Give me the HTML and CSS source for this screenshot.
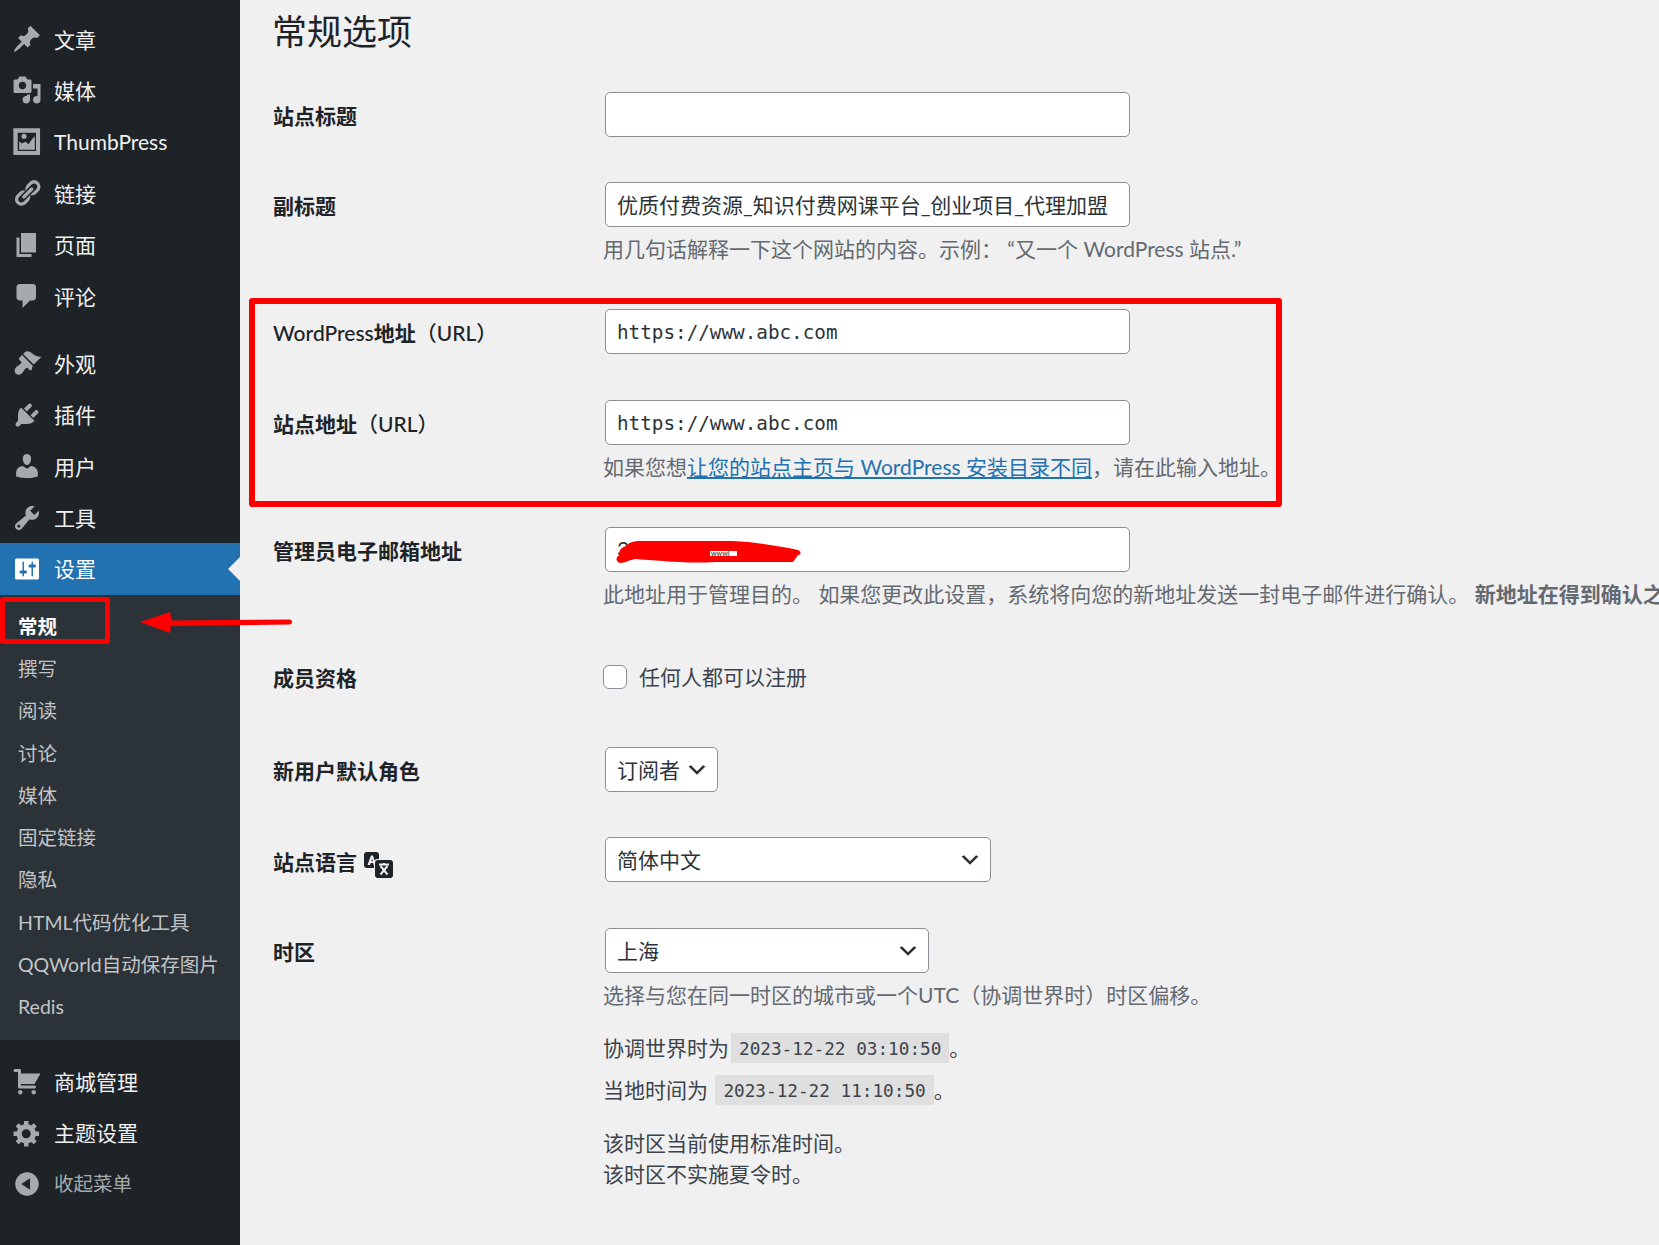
FILE: index.html
```html
<!DOCTYPE html>
<html lang="zh-CN">
<head>
<meta charset="utf-8">
<title>常规选项</title>
<link rel="stylesheet" href="styles.css">
</head>
<body>
<nav class="sidebar">
  <ul class="menu">
    <li class="item"><svg class="icon" viewBox="0 0 20 20"><path d="M10.44 3.02l1.82-1.82 6.36 6.35-1.83 1.82c-1.05-.68-2.48-.57-3.41.36l-.75.75c-.92.93-1.04 2.35-.35 3.41l-1.83 1.82-2.41-2.41-2.8 2.79c-.42.42-3.38 2.71-3.8 2.29s1.86-3.39 2.28-3.81l2.79-2.79L4.1 9.36l1.83-1.82c1.05.69 2.48.57 3.4-.36l.75-.75c.93-.92 1.05-2.35.36-3.41z"/></svg>文章</li>
    <li class="item"><svg class="icon" viewBox="0 0 20 20"><path d="M13 11V4c0-.55-.45-1-1-1h-1.67L9 1H5L3.67 3H2c-.55 0-1 .45-1 1v7c0 .55.45 1 1 1h10c.55 0 1-.45 1-1zM7 4.5c1.38 0 2.5 1.12 2.5 2.5S8.38 9.5 7 9.5 4.5 8.38 4.5 7 5.62 4.5 7 4.5zM14 6h5v10.5c0 1.38-1.12 2.5-2.5 2.5S14 17.88 14 16.5s1.12-2.5 2.5-2.5c.17 0 .34.02.5.05V9h-3V6zm-4 8.05V13h2v3.5c0 1.38-1.12 2.5-2.5 2.5S7 17.88 7 16.5 8.12 14 9.5 14c.17 0 .34.02.5.05z"/></svg>媒体</li>
    <li class="item"><svg class="icon" viewBox="0 0 20 20"><path fill-rule="evenodd" d="M.9.9h17.800v17.800H.9zM3.800 3.800v12.200h12.200V3.800z"/><path d="M4.800 9.500l1.700 1.500 2.500-1.200 2 1.700 2.500-3.500 1.700-2v9.200H4.800z"/><circle cx="8" cy="6.200" r="1.700"/></svg>ThumbPress</li>
    <li class="item"><svg class="icon" viewBox="0 0 20 20"><path d="M17.74 2.76c1.68 1.69 1.68 4.41 0 6.1l-1.53 1.52c-1.12 1.12-2.7 1.47-4.14 1.09l2.62-2.61.76-.77.76-.76c.84-.84.84-2.2 0-3.04-.84-.85-2.2-.85-3.04 0l-.77.76-3.38 3.38c-.37-1.44-.02-3.02 1.1-4.14l1.52-1.53c1.69-1.68 4.42-1.68 6.1 0zM8.59 13.43l5.34-5.34c.42-.42.42-1.1 0-1.52-.44-.43-1.13-.39-1.53 0l-5.33 5.34c-.42.42-.42 1.1 0 1.52.44.43 1.13.39 1.52 0zm-.76 2.29l4.14-4.15c.38 1.44.03 3.02-1.09 4.14l-1.52 1.53c-1.69 1.68-4.41 1.68-6.1 0-1.68-1.68-1.68-4.42 0-6.1l1.53-1.52c1.12-1.12 2.7-1.47 4.14-1.1l-4.14 4.15c-.85.84-.85 2.2 0 3.05.84.84 2.2.84 3.04 0z"/></svg>链接</li>
    <li class="item"><svg class="icon" viewBox="0 0 20 20"><path d="M6 15V2h10v13H6zm-1 1h8v2H3V5h2v11z"/></svg>页面</li>
    <li class="item"><svg class="icon" viewBox="0 0 20 20"><path d="M5 2h9c1.1 0 2 .9 2 2v7c0 1.1-.9 2-2 2h-2l-5 5v-5H5c-1.1 0-2-.9-2-2V4c0-1.1.9-2 2-2z"/></svg>评论</li>
  </ul>
  <ul class="menu">
    <li class="item"><svg class="icon" viewBox="0 0 20 20"><path d="M14.48 11.06L7.41 3.99l1.5-1.5c.5-.56 2.3-.47 3.51.32 1.21.8 1.43 1.28 2.91 2.1 1.18.64 2.45 1.26 4.45.85zm-.71.71L6.7 4.7 4.93 6.47c-.39.39-.39 1.02 0 1.41l1.06 1.06c.39.39.39 1.03 0 1.42-.6.6-1.43 1.11-2.21 1.69-.35.26-.7.53-1.01.84-1.38 1.38-1.13 3.28-.26 4.15.87.87 2.77 1.12 4.15-.26.31-.31.58-.66.84-1.01.58-.78 1.09-1.61 1.69-2.21.39-.39 1.03-.39 1.42 0l1.06 1.06c.39.39 1.02.39 1.41 0z"/></svg>外观</li>
    <li class="item"><svg class="icon" viewBox="0 0 20 20"><path d="M13.11 4.36L9.87 7.6 8 5.73l3.24-3.24c.35-.34 1.05-.2 1.56.32.52.51.66 1.21.31 1.55zm-8 1.77l.91-1.12 9.01 9.01-1.19.84c-.71.71-2.63 1.16-3.82 1.16H6.14L4.9 17.26c-.59.59-1.54.59-2.12 0-.59-.58-.59-1.53 0-2.12l1.24-1.24v-3.88c0-1.13.4-3.19 1.09-3.89zm7.26 3.97l3.24-3.24c.34-.35 1.04-.21 1.55.31.52.51.66 1.21.31 1.55l-3.24 3.25z"/></svg>插件</li>
    <li class="item"><svg class="icon" viewBox="0 0 20 20"><path d="M10 9.25c-2.27 0-2.73-3.44-2.73-3.44C7 4.02 7.82 2 9.97 2c2.16 0 2.98 2.02 2.71 3.81 0 0-.41 3.44-2.68 3.44zm0 2.57L12.72 10c2.39 0 4.52 2.33 4.52 4.53v2.49s-3.65 1.13-7.24 1.13c-3.65 0-7.24-1.13-7.24-1.13v-2.49c0-2.25 1.94-4.48 4.47-4.48z"/></svg>用户</li>
    <li class="item"><svg class="icon" viewBox="0 0 20 20"><path d="M16.68 9.77c-1.34 1.34-3.3 1.67-4.95.99l-5.41 6.52c-.99.99-2.59.99-3.58 0s-.99-2.59 0-3.57l6.52-5.42c-.68-1.65-.35-3.61.99-4.95 1.28-1.28 3.12-1.62 4.72-1.06l-2.89 2.89 2.82 2.82 2.86-2.87c.53 1.58.18 3.39-1.08 4.65zM3.81 16.21c.4.39 1.04.39 1.43 0 .4-.4.4-1.04 0-1.43-.39-.4-1.03-.4-1.43 0-.39.39-.39 1.03 0 1.43z"/></svg>工具</li>
    <li class="item item-active"><svg class="icon" viewBox="0 0 20 20"><path d="M18 16V4c0-.55-.45-1-1-1H3c-.55 0-1 .45-1 1v12c0 .55.45 1 1 1h14c.55 0 1-.45 1-1zM8 11h1c.55 0 1 .45 1 1s-.45 1-1 1H8v1.5c0 .28-.22.5-.5.5s-.5-.22-.5-.5V13H6c-.55 0-1-.45-1-1s.45-1 1-1h1V5.5c0-.28.22-.5.5-.5s.5.22.5.5V11zm5-2h-1c-.55 0-1-.45-1-1s.45-1 1-1h1V5.5c0-.28.22-.5.5-.5s.5.22.5.5V7h1c.55 0 1 .45 1 1s-.45 1-1 1h-1v5.5c0 .28-.22.5-.5.5s-.5-.22-.5-.5V9z"/></svg>设置</li>
  </ul>
  <ul class="submenu">
    <li class="subitem subitem-current">常规</li>
    <li class="subitem">撰写</li>
    <li class="subitem">阅读</li>
    <li class="subitem">讨论</li>
    <li class="subitem">媒体</li>
    <li class="subitem">固定链接</li>
    <li class="subitem">隐私</li>
    <li class="subitem">HTML代码优化工具</li>
    <li class="subitem">QQWorld自动保存图片</li>
    <li class="subitem">Redis</li>
  </ul>
  <ul class="menu menu-last">
    <li class="item"><svg class="icon" viewBox="0 0 20 20"><path d="M6 13h9c.55 0 1 .45 1 1s-.45 1-1 1H5c-.55 0-1-.45-1-1V4H2c-.55 0-1-.45-1-1s.45-1 1-1h3c.55 0 1 .45 1 1v2h13l-4 7H6v1zm-.5 3c.83 0 1.5.67 1.5 1.5S6.33 19 5.5 19 4 18.33 4 17.5 4.67 16 5.5 16zm9 0c.83 0 1.5.67 1.5 1.5s-.67 1.5-1.5 1.5-1.5-.67-1.5-1.5.67-1.5 1.5-1.5z"/></svg>商城管理</li>
    <li class="item"><svg class="icon" viewBox="0 0 20 20"><path d="M18 12h-2.18c-.17.7-.44 1.35-.81 1.93l1.54 1.54-2.1 2.1-1.54-1.54c-.58.36-1.23.63-1.91.79V19H8v-2.18c-.68-.16-1.33-.43-1.91-.79l-1.54 1.54-2.12-2.12 1.54-1.54c-.36-.58-.63-1.23-.79-1.91H1V9.03h2.17c.16-.7.44-1.35.8-1.94L2.43 5.55l2.1-2.1 1.54 1.54c.58-.37 1.24-.64 1.93-.81V2h3v2.18c.68.16 1.33.43 1.91.79l1.54-1.54 2.12 2.12-1.54 1.54c.36.59.64 1.24.8 1.94H18V12zm-8.5 1.5c1.66 0 3-1.34 3-3s-1.34-3-3-3-3 1.34-3 3 1.34 3 3 3z"/></svg>主题设置</li>
    <li class="item item-muted"><svg class="icon" viewBox="0 0 20 20"><path d="M10 2.16c4.33 0 7.84 3.51 7.84 7.84s-3.51 7.84-7.84 7.84S2.16 14.33 2.16 10 5.71 2.16 10 2.16zm2 11.72V6.12L6.18 9.97z"/></svg>收起菜单</li>
  </ul>
</nav>

<main class="content">
  <h1 class="title">常规选项</h1>

  <div class="row">
    <label class="label">站点标题</label>
    <div class="field"><input class="text" type="text" value=""></div>
  </div>

  <div class="row">
    <label class="label">副标题</label>
    <div class="field">
      <input class="text" type="text" value="优质付费资源_知识付费网课平台_创业项目_代理加盟">
      <p class="desc">用几句话解释一下这个网站的内容。示例： “又一个 WordPress 站点.”</p>
    </div>
  </div>

  <div class="row row-wide">
    <label class="label"><span class="label-latin">WordPress</span>地址<span class="label-latin">（URL）</span></label>
    <div class="field"><input class="text mono" type="text" value="https://www.abc.com"></div>
  </div>

  <div class="row">
    <label class="label">站点地址<span class="label-latin">（URL）</span></label>
    <div class="field">
      <input class="text mono" type="text" value="https://www.abc.com">
      <p class="desc">如果您想<a class="link" href="#">让您的站点主页与 WordPress 安装目录不同</a>，请在此输入地址。</p>
    </div>
  </div>

  <div class="row">
    <label class="label">管理员电子邮箱地址</label>
    <div class="field">
      <input class="text" type="text" value="33">
      <p class="desc">此地址用于管理目的。 如果您更改此设置，系统将向您的新地址发送一封电子邮件进行确认。 <strong>新地址在得到确认之后才会生效。</strong></p>
    </div>
  </div>

  <div class="row row-wider">
    <label class="label">成员资格</label>
    <div class="field"><label class="check"><input class="checkbox" type="checkbox">任何人都可以注册</label></div>
  </div>

  <div class="row">
    <label class="label">新用户默认角色</label>
    <div class="field"><select class="select select-role"><option>订阅者</option></select></div>
  </div>

  <div class="row row-wide">
    <label class="label label-icon">站点语言
      <svg class="lang-icon" viewBox="0 0 30 26"><rect x="1" y="0" width="15" height="16" rx="3"/><path class="lang-cut" d="M4.500 13l3.500-9.500h2l3 9.500h-2.300l-.6-2H7.700l-.8 2zM8.300 9.200h1.500L9.100 6.500z"/><rect x="11" y="7" width="19" height="19" rx="3.500" class="lang-back"/><rect x="12" y="8" width="18" height="18" rx="3"/><path class="lang-line" d="M16 12.500h10M21 11v2M17.500 14l7 8.500M24.500 14l-7 8.500"/></svg>
    </label>
    <div class="field"><select class="select select-lang"><option>简体中文</option></select></div>
  </div>

  <div class="row">
    <label class="label">时区</label>
    <div class="field">
      <select class="select select-tz"><option>上海</option></select>
      <p class="desc">选择与您在同一时区的城市或一个UTC（协调世界时）时区偏移。</p>
      <p class="time time-first">协调世界时为<code class="code">2023-12-22 03:10:50</code>。</p>
      <p class="time">当地时间为 <code class="code">2023-12-22 11:10:50</code>。</p>
      <p class="note">该时区当前使用标准时间。<br>该时区不实施夏令时。</p>
    </div>
  </div>
</main>

<div class="mark mark-box"></div>
<div class="mark mark-sub"></div>
<svg class="mark mark-arrow" viewBox="0 0 152 22"><path d="M150 7.500L32 8.500 30 0 0 10l30 11 1-7 119-1.500c3-1 3-4 0-5z"/></svg>
<svg class="mark mark-scribble" viewBox="0 0 186 25"><path d="M3 22C0 19 2 16 5 15 3 12 5 8 11 6 14 2 20 1 25 1L118 1C140 2 165 6 183 10 187 12 186 15 183 15L178 22 100 22C70 24 40 20 20 19 14 20 6 25 3 22z"/><rect class="scribble-gap" x="95" y="11" width="27" height="5"/><text class="scribble-text" x="96" y="16">wwwl</text></svg>
</body>
</html>
```

FILE: styles.css
```css
* { box-sizing: border-box; }
html, body { margin: 0; padding: 0; height: 1245px; overflow: hidden; }
body {
  position: relative;
  display: flex;
  background: #f0f0f1;
  color: #1d2327;
  font-family: Lato, "Noto Sans CJK SC", sans-serif;
  font-size: 21px;
}
ul { list-style: none; margin: 0; padding: 0; }

/* sidebar */
.sidebar { width: 240px; flex: none; background: #1d2327; padding-top: 13.4px; }
.menu { margin-bottom: 16px; }
.menu:nth-child(2) { margin-bottom: 0; }
.menu-last { margin-top: 16px; }
.item {
  position: relative;
  display: flex;
  align-items: center;
  height: 51.4px;
  padding-left: 12px;
  color: #f0f0f1;
  font-size: 21px;
  line-height: 1;
}
.icon { width: 30px; height: 30px; margin-right: 12px; fill: #a7aaad; flex: none; }
.item-active { background: #2271b1; color: #fff; }
.item-active .icon { fill: #fff; }
.item-active::after {
  content: "";
  position: absolute;
  right: 0;
  top: 50%;
  margin-top: -12px;
  border: 12px solid transparent;
  border-left: 0;
  border-right-color: #f0f0f1;
}
.item-muted { color: #a7aaad; font-size: 19.5px; }
.submenu { background: #2c3338; padding: 11px 0; }
.subitem {
  height: 42.3px;
  line-height: 42px;
  padding-left: 18px;
  font-size: 19.5px;
  color: #c3c4c7;
  white-space: nowrap;
}
.subitem-current { color: #fff; font-weight: 700; }

/* content */
.content { flex: 1; min-width: 0; padding: 9px 0 0 33px; }
.title { margin: 0 0 38px -1px; font-size: 35px; font-weight: 400; line-height: 45px; }
.row { display: grid; grid-template-columns: 332px 1fr; margin-bottom: 45px; }
.row-wide { margin-bottom: 46px; }
.row-wider { margin-bottom: 48px; }
.label { display: block; height: 45px; font-weight: 600; line-height: 48px; white-space: nowrap; }
.label-latin { font-weight: 500; }
.label-icon { display: flex; align-items: center; padding-top: 4px; }
.lang-icon { width: 30px; height: 26px; margin-left: 6px; margin-top: 6px; fill: #1d2327; }
.lang-cut { fill: #f0f0f1; }
.lang-back { fill: #f0f0f1; }
.lang-line { fill: none; stroke: #f0f0f1; stroke-width: 2; }
.field { min-width: 0; }
.text {
  display: block;
  width: 525px;
  height: 45px;
  padding: 0 11px 2px;
  background: #fff;
  border: 1px solid #8c8f94;
  border-radius: 5px;
  color: #2c3338;
  font-family: inherit;
  font-size: 21px;
}
.mono { padding: 2px 11px 0; font-family: "DejaVu Sans Mono", monospace; font-size: 19.3px; }
.desc {
  margin: 7px 0 0 -2px;
  color: #646970;
  line-height: 30px;
  white-space: nowrap;
}
.link { color: #2271b1; }
.check { display: flex; align-items: center; height: 45px; padding-bottom: 2px; margin-left: -2px; color: #3c434a; }
.checkbox {
  appearance: none;
  width: 24px;
  height: 24px;
  margin: 2px 12px 0 0;
  background: #fff;
  border: 1px solid #8c8f94;
  border-radius: 6px;
}
.select {
  display: block;
  appearance: none;
  height: 45px;
  padding: 0 36px 0 11px;
  border: 1px solid #8c8f94;
  border-radius: 5px;
  color: #2c3338;
  font-family: inherit;
  font-size: 21px;
  background: #fff url("data:image/svg+xml;charset=utf-8,%3Csvg xmlns='http://www.w3.org/2000/svg' viewBox='0 0 20 20'%3E%3Cpath fill='%232c3338' d='M5 6l5 5 5-5 2 1-7 7-7-7 2-1z'/%3E%3C/svg%3E") no-repeat right 8px top 50% / 24px 24px;
}
.select-role { width: 113px; }
.select-lang { width: 386px; }
.select-tz { width: 324px; }
.time { margin: 12px 0 0 -2px; line-height: 30px; color: #3c434a; white-space: nowrap; }
.time-first { margin-top: 23px; }
.code {
  display: inline-block;
  padding: 0 8px;
  margin-left: 2px;
  background: rgba(0, 0, 0, .07);
  font-family: "DejaVu Sans Mono", monospace;
  font-size: 17.7px;
  line-height: 33px;
  height: 30px;
  vertical-align: top;
}
.note { margin: 22px 0 0 -2px; line-height: 31px; color: #3c434a; }

/* red annotations over the screenshot */
.mark { position: absolute; }
.mark-box {
  left: 249px; top: 298px; width: 1033px; height: 209px;
  border: 6px solid #f00; border-radius: 3px;
}
.mark-sub {
  left: 0; top: 597px; width: 110px; height: 47px;
  border: 5px solid #f00; border-radius: 3px;
}
.mark-arrow { left: 140px; top: 612px; width: 152px; height: 22px; fill: #f00; }
.mark-scribble { left: 615px; top: 540px; width: 186px; height: 25px; fill: #f00; }
.scribble-gap { fill: #fff; }
.scribble-text { fill: #50575e; font-size: 7px; font-weight: 700; font-family: Lato, sans-serif; }
```
